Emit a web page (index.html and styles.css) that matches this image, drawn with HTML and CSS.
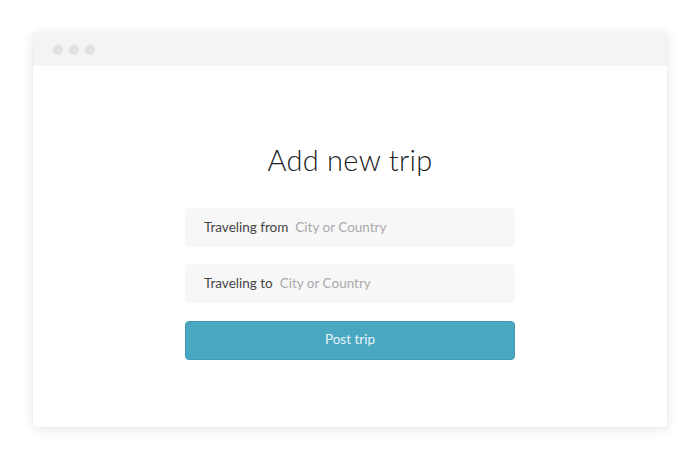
FILE: index.html
```html
<!DOCTYPE html>
<html>
<head>
<meta charset="utf-8">
<link rel="stylesheet" href="styles.css">
</head>
<body>
<div class="window">
  <div class="titlebar">
    <span class="dot"></span><span class="dot"></span><span class="dot"></span>
  </div>
  <div class="content">
    <h1 class="title">Add new trip</h1>
    <form class="form">
      <label class="field"><span class="label">Traveling from</span><span class="placeholder">City or Country</span></label>
      <label class="field"><span class="label">Traveling to</span><span class="placeholder">City or Country</span></label>
      <button type="button" class="btn">Post trip</button>
    </form>
  </div>
</div>
</body>
</html>
```
FILE: styles.css
```css
html, body { margin: 0; padding: 0; background: #fff; }
body {
  font-family: "Lato", "Open Sans", sans-serif;
  padding: 32px 33px;
  width: 700px; height: 459px; box-sizing: border-box;
}
.window {
  width: 634px;
  height: 395px;
  background: #fff;
  border-radius: 3px;
  box-shadow: 0 2px 12px rgba(0,0,0,0.10), 0 0 2px rgba(0,0,0,0.06);
  overflow: hidden;
  display: flex;
  flex-direction: column;
}
.titlebar {
  height: 34px;
  background: #f4f4f4;
  display: flex;
  align-items: center;
  gap: 6px;
  padding-left: 20px;
  padding-top: 1px;
  box-sizing: border-box;
}
.dot {
  width: 10px; height: 10px; border-radius: 50%;
  background: #e1e1e1;
}
.content {
  display: flex;
  flex-direction: column;
  align-items: center;
}
.title {
  margin: 76px 0 0;
  font-weight: 300;
  font-size: 29px;
  line-height: 36px;
  color: #222;
  letter-spacing: 0.3px;
}
.form {
  margin-top: 30px;
  width: 330px;
  display: flex;
  flex-direction: column;
  gap: 17px;
}
.field {
  height: 39px;
  background: #f7f7f7;
  border-radius: 4px;
  display: flex;
  align-items: center;
  padding-left: 19px;
  padding-bottom: 1px;
  box-sizing: border-box;
  font-size: 13.5px;
  gap: 7px;
}
.label { color: #444; }
.placeholder { color: #aaa; }
.btn {
  height: 39px;
  background: #4aa7c1;
  border: 1px solid #3f9bb5;
  border-radius: 4px;
  color: #e8f5f9;
  font-family: inherit;
  font-size: 13.5px;
  padding: 0 0 3px;
  margin-top: 1px;
}
```
